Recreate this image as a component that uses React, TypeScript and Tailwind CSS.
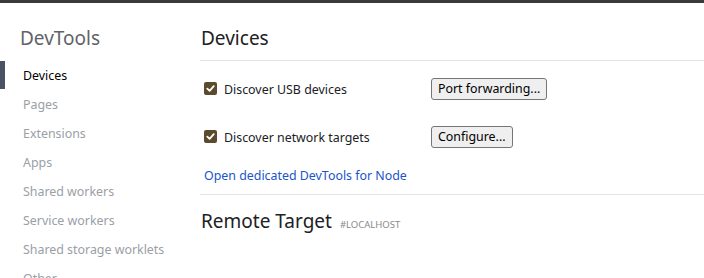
import React from 'react'

const NAV = ['Devices', 'Pages', 'Extensions', 'Apps', 'Shared workers', 'Service workers', 'Shared storage worklets', 'Other']

function Check() {
  return (
    <span className="flex h-[13px] w-[13px] shrink-0 items-center justify-center rounded-[2px] bg-[#5b4a2c]">
      <svg width="9" height="9" viewBox="0 0 10 10" fill="none">
        <path d="M1.5 5.2 L4 7.6 L8.6 2.4" stroke="white" strokeWidth="2" strokeLinecap="round" strokeLinejoin="round" />
      </svg>
    </span>
  )
}

function Row({ label, button }: { label: string; button: string }) {
  return (
    <div className="flex h-[48px] items-center pl-[4px]">
      <div className="flex w-[227px] items-center gap-[7px]">
        <Check />
        <span className="pt-[3px] text-[12.4px] text-[#202124]">{label}</span>
      </div>
      <button className="h-[22px] rounded-[3px] border border-[#767676] bg-[#efefef] px-[6px] pt-px text-[12.4px] leading-none text-black">
        {button}
      </button>
    </div>
  )
}

export default function App() {
  return (
    <div className="h-[278px] w-[704px] overflow-hidden bg-white font-['Noto_Sans',sans-serif]">
      <div className="h-[3px] bg-[#3a3a3a]" />
      <div className="flex">
        <aside className="w-[200px] shrink-0">
          <h1 className="pl-[20px] pt-[22px] text-[19px] leading-[26px] text-[#5f6368]">DevTools</h1>
          <ul className="mt-[10px]">
            {NAV.map((item, i) => (
              <li key={item} className="relative flex h-[29px] items-center pl-[23px] pt-[2px] text-[12.4px]">
                {i === 0 && <span className="absolute left-0 top-0 h-[28px] w-[5px] bg-[#4a5263]" />}
                <span className={i === 0 ? 'text-black' : 'text-[#9aa0a6]'}>{item}</span>
              </li>
            ))}
          </ul>
        </aside>
        <main className="flex-1">
          <h2 className="pl-[1px] pt-[22px] text-[19px] leading-[26px] text-[#202124]">Devices</h2>
          <div className="mt-[9px] h-px bg-[#e4e4e4]" />
          <div className="mt-[4px]">
            <Row label="Discover USB devices" button="Port forwarding..." />
            <Row label="Discover network targets" button="Configure..." />
          </div>
          <a className="block pl-[4px] pt-[2px] text-[12.4px] leading-[26px] text-[#1a55c9]">Open dedicated DevTools for Node</a>
          <div className="mt-[5px] h-px bg-[#e4e4e4]" />
          <div className="flex items-baseline gap-[8px] pt-[13px]">
            <h2 className="pl-[1px] text-[19px] leading-[26px] text-[#202124]">Remote Target</h2>
            <span className="text-[9.5px] uppercase text-[#8a8a8a]">#localhost</span>
          </div>
        </main>
      </div>
    </div>
  )
}
